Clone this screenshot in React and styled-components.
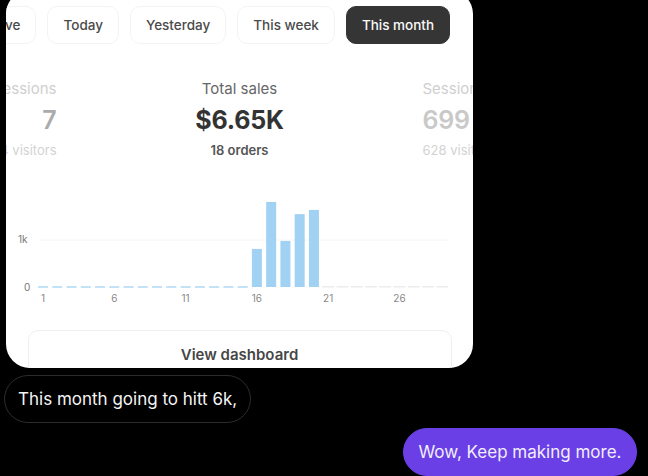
import React from "react";
import styled, { createGlobalStyle } from "styled-components";

const GlobalStyle = createGlobalStyle`
  html, body {
    margin: 0;
    padding: 0;
    background: #000;
    overflow: hidden;
  }
  body {
    font-family: Inter, "Noto Sans", sans-serif;
  }
`;

const Screen = styled.div`
  width: 648px;
  height: 476px;
  background: #000;
  display: flex;
  flex-direction: column;
  overflow: hidden;
`;

const Card = styled.div`
  margin: -10px 0 0 6px;
  width: 467px;
  height: 378px;
  flex: none;
  background: #fff;
  border-radius: 24px;
  overflow: hidden;
  display: flex;
  flex-direction: column;
  align-items: center;

  & > * {
    flex-shrink: 0;
  }
`;

const TabScroller = styled.div`
  align-self: stretch;
  padding-top: 16px;
  overflow: hidden;
`;

const TabRow = styled.div`
  display: flex;
  gap: 11px;
  margin-left: -28px;
`;

const Tab = styled.div`
  flex: none;
  height: 38px;
  padding: 0 15px;
  box-sizing: border-box;
  display: flex;
  align-items: center;
  border-radius: 10px;
  border: 1px solid ${(p) => (p.$active ? "#353535" : "#f3f3f3")};
  background: ${(p) => (p.$active ? "#353535" : "#fff")};
  color: ${(p) => (p.$active ? "#fafafa" : "#4a4a4a")};
  font-size: 13.5px;
  font-weight: 500;
  white-space: nowrap;
`;

const StatsRow = styled.div`
  margin-top: 35px;
  width: 467px;
  display: flex;
  justify-content: center;
  gap: 118px;
`;

const Stat = styled.div`
  flex: none;
  width: 130px;
  display: flex;
  flex-direction: column;
  align-items: ${(p) =>
    p.$align === "right" ? "flex-end" : p.$align === "left" ? "flex-start" : "center"};
  white-space: nowrap;
`;

const StatLabel = styled.div`
  font-size: 15px;
  line-height: 20px;
  color: ${(p) => (p.$faded ? "#cfcfcf" : "#666")};
`;

const StatValue = styled.div`
  margin-top: 5px;
  font-size: 25px;
  line-height: 32px;
  font-weight: ${(p) => (p.$faded ? 600 : 700)};
  letter-spacing: -0.2px;
  color: ${(p) => p.$color || "#333"};
`;

const StatSub = styled.div`
  margin-top: 5px;
  font-size: 13px;
  line-height: 18px;
  font-weight: ${(p) => (p.$faded ? 400 : 600)};
  color: ${(p) => (p.$faded ? "#d3d3d3" : "#555")};
`;

const Chart = styled.svg`
  align-self: flex-start;
  display: block;
  margin: 31px 0 0 6px;
  font-family: Inter, "Noto Sans", sans-serif;
`;

const DashboardButton = styled.div`
  margin-top: 20px;
  width: 424px;
  height: 48px;
  box-sizing: border-box;
  border: 1px solid #efefef;
  border-radius: 10px;
  display: flex;
  align-items: center;
  justify-content: center;
  font-size: 15px;
  font-weight: 600;
  color: #464646;
`;

const Thread = styled.div`
  display: flex;
  flex-direction: column;
  gap: 5px;
  padding: 7px 11px 0 4px;
`;

const Bubble = styled.div`
  align-self: ${(p) => (p.$mine ? "flex-end" : "flex-start")};
  height: 48px;
  box-sizing: border-box;
  padding: 0 ${(p) => (p.$mine ? "14.5px" : "13px")};
  display: flex;
  align-items: center;
  border-radius: 24px;
  border: 1px solid ${(p) => (p.$mine ? "#6a3fe6" : "#2c2c2c")};
  background: ${(p) => (p.$mine ? "#6a3fe6" : "#000")};
  color: ${(p) => (p.$mine ? "#f1eefd" : "#f4f4f4")};
  font-size: 17px;
  white-space: nowrap;
`;

const tabs = ["Live", "Today", "Yesterday", "This week", "This month"];

// daily sales for the month, 0 where nothing sold yet
const sales = [
  0, 0, 0, 0, 0, 0, 0, 0, 0, 0, 0, 0, 0, 0, 0,
  810, 1810, 980, 1550, 1640,
  null, null, null, null, null, null, null, null, null,
];

const STEP = 14.26;
const BASE = 97;
const PER_K = 47;

function SalesChart() {
  const dayX = (i) => 31 + i * STEP;
  return (
    <Chart width="444" height="120" viewBox="0 0 444 120">
      <line x1="28" y1="50" x2="436" y2="50" stroke="#f4f4f4" strokeWidth="1" />
      <text x="6" y="53" fontSize="10" fill="#777">1k</text>
      <text x="12" y="101" fontSize="10" fill="#777">0</text>
      {sales.map((v, i) => {
        const x = dayX(i);
        if (v === null) {
          return (
            <rect key={i} x={x - 6} y={BASE - 1} width="12" height="1.5" fill="#ececec" />
          );
        }
        if (v === 0) {
          return (
            <rect key={i} x={x - 5} y={BASE - 1} width="10" height="2" fill="#c4e2f5" />
          );
        }
        const h = (v / 1000) * PER_K;
        return <rect key={i} x={x - 5} y={BASE - h} width="10" height={h} fill="#a2d2f3" />;
      })}
      {[1, 6, 11, 16, 21, 26].map((d) => (
        <text key={d} x={dayX(d - 1)} y="112" fontSize="10" fill="#888" textAnchor="middle">
          {d}
        </text>
      ))}
    </Chart>
  );
}

export default function App() {
  return (
    <Screen>
      <GlobalStyle />
      <Card>
        <TabScroller>
          <TabRow>
            {tabs.map((t) => (
              <Tab key={t} $active={t === "This month"}>
                {t}
              </Tab>
            ))}
          </TabRow>
        </TabScroller>

        <StatsRow>
          <Stat $align="right">
            <StatLabel $faded>Sessions</StatLabel>
            <StatValue $faded $color="#ababab">7</StatValue>
            <StatSub $faded>4 visitors</StatSub>
          </Stat>
          <Stat>
            <StatLabel>Total sales</StatLabel>
            <StatValue>$6.65K</StatValue>
            <StatSub>18 orders</StatSub>
          </Stat>
          <Stat $align="left">
            <StatLabel $faded>Sessions</StatLabel>
            <StatValue $faded $color="#c9c9c9">699</StatValue>
            <StatSub $faded>628 visitors</StatSub>
          </Stat>
        </StatsRow>

        <SalesChart />

        <DashboardButton>View dashboard</DashboardButton>
      </Card>

      <Thread>
        <Bubble>This month going to hitt 6k,</Bubble>
        <Bubble $mine>Wow, Keep making more.</Bubble>
      </Thread>
    </Screen>
  );
}
